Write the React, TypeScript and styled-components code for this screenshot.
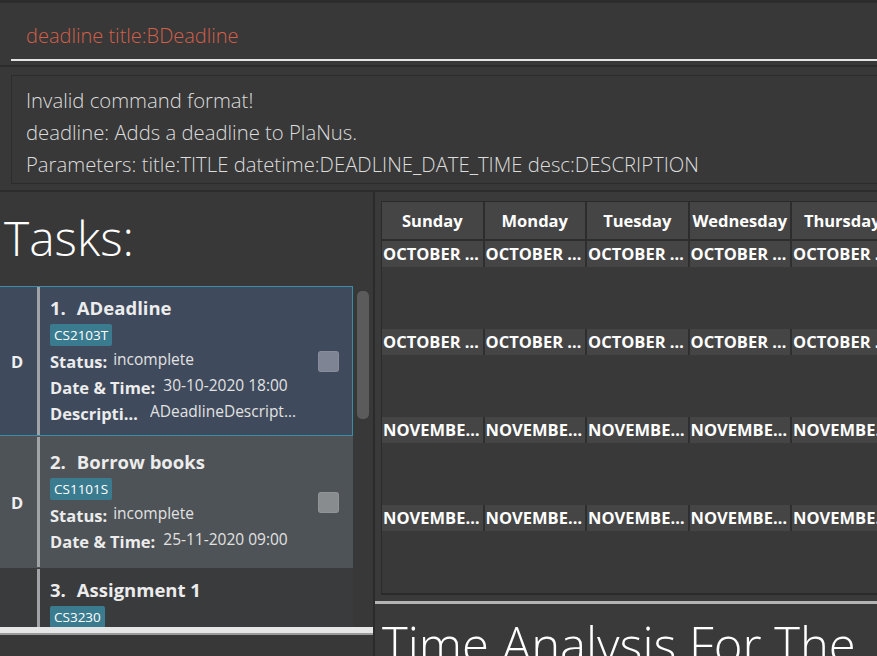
import styled, { createGlobalStyle } from "styled-components";

const GlobalStyle = createGlobalStyle`
  html, body {
    margin: 0;
    padding: 0;
    background: #383838;
    overflow: hidden;
  }
  * { box-sizing: border-box; }
`;

const Window = styled.div`
  width: 877px;
  height: 656px;
  display: flex;
  flex-direction: column;
  background: #383838;
  overflow: hidden;
  font-family: "Open Sans", "Noto Sans", sans-serif;
  color: #ffffff;
`;

const CommandBar = styled.div`
  height: 67px;
  flex-shrink: 0;
  border-top: 3px solid #2c2c2c;
  border-bottom: 2px solid #2c2c2c;
  padding: 0 0 0 11px;
`;

const CommandInput = styled.div`
  height: 58px;
  border-bottom: 2px solid #e4e4e4;
  padding: 19px 0 0 15px;
  font-size: 20px;
  font-weight: 300;
  line-height: 28px;
  color: #d45f48;
  white-space: nowrap;
`;

const ResultBox = styled.div`
  margin: 8px 0 0 11px;
  height: 109px;
  flex-shrink: 0;
  border: 1px solid #2c2c2c;
  border-right: none;
  padding: 8px 0 0 14px;
  font-size: 20.3px;
  font-weight: 300;
  line-height: 32px;
  color: #dcdcdc;
  white-space: nowrap;
`;

const Main = styled.div`
  flex: 1;
  margin-top: 6px;
  display: flex;
  border-top: 2px solid #2c2c2c;
  min-height: 0;
`;

const LeftPane = styled.div`
  width: 375px;
  flex-shrink: 0;
  display: flex;
  flex-direction: column;
  border-right: 2px solid #2b2b2b;
  overflow: hidden;
`;

const PaneTitle = styled.div`
  height: 94px;
  flex-shrink: 0;
  padding: 16px 0 0 4px;
  font-size: 48px;
  font-weight: 300;
  line-height: 60px;
  color: #ffffff;
  white-space: nowrap;
`;

const ListArea = styled.div`
  height: 341px;
  flex-shrink: 0;
  display: flex;
  overflow: hidden;
`;

const CardColumn = styled.div`
  width: 353px;
  flex-shrink: 0;
  display: flex;
  flex-direction: column;
`;

const Card = styled.div<{ $bg: string; $selected?: boolean }>`
  display: grid;
  grid-template-columns: 37px 3px 1fr 34px;
  min-height: 132px;
  background: ${(p) => p.$bg};
  border: 1px solid ${(p) => (p.$selected ? "#3b8da3" : p.$bg)};
  border-left: none;
  flex-shrink: 0;
`;

const TypeCell = styled.div`
  display: flex;
  align-items: center;
  padding-left: 11px;
  font-size: 16.5px;
  font-weight: 700;
  color: #f0f0f0;
`;

const Bar = styled.div`
  background: #a1a3a7;
`;

const CardBody = styled.div`
  padding: 8px 0 8px 10px;
  display: flex;
  flex-direction: column;
  justify-content: center;
  min-width: 0;
`;

const CardTitle = styled.div`
  font-size: 18.5px;
  font-weight: 700;
  line-height: 26px;
  color: #ececec;
  white-space: nowrap;
  span { margin-right: 11px; }
`;

const Tag = styled.span`
  align-self: flex-start;
  margin: 3px 0 3px;
  padding: 0 4px;
  height: 22px;
  line-height: 22px;
  background: #3b7b90;
  border-radius: 2px;
  font-size: 13.5px;
  color: #ffffff;
`;

const Field = styled.div`
  display: flex;
  align-items: flex-start;
  height: 26px;
  white-space: nowrap;
`;

const FieldLabel = styled.span<{ $max?: number }>`
  font-size: 16.5px;
  font-weight: 700;
  line-height: 26px;
  color: #ececec;
  margin-right: 6px;
  ${(p) => (p.$max ? `max-width: ${p.$max}px; overflow: hidden; text-overflow: ellipsis;` : "")}
`;

const FieldValue = styled.span<{ $max?: number; $gap?: number }>`
  font-size: 15.5px;
  line-height: 20px;
  color: #e2e2e2;
  margin-left: ${(p) => p.$gap ?? 0}px;
  ${(p) => (p.$max ? `max-width: ${p.$max}px; overflow: hidden; text-overflow: ellipsis;` : "")}
`;

const CheckCell = styled.div`
  display: flex;
  align-items: center;
`;

const CheckBox = styled.div<{ $tone: string }>`
  width: 21px;
  height: 21px;
  border-radius: 3px;
  background: ${(p) => p.$tone};
  box-shadow: inset 0 0 0 1px rgba(255, 255, 255, 0.08);
`;

const ScrollTrack = styled.div`
  flex: 1;
  padding: 5px 4px 0 4px;
`;

const ScrollThumb = styled.div`
  height: 128px;
  background: #5b5b5b;
  border-radius: 5px;
`;

const HScroll = styled.div`
  height: 8px;
  flex-shrink: 0;
  background: #e6e6e6;
  border-bottom: 2px solid #9a9a9a;
`;

const RightPane = styled.div`
  flex: 1;
  min-width: 0;
  display: flex;
  flex-direction: column;
  background: #3a3a3a;
  overflow: hidden;
`;

const Calendar = styled.div`
  flex-shrink: 0;
  margin: 9px 0 0 6px;
  width: 720px;
  border-left: 1px solid #2a2a2a;
  border-top: 1px solid #2a2a2a;
  border-bottom: 2px solid #2a2a2a;
  background: #393939;
`;

const WeekRow = styled.div`
  display: grid;
  grid-template-columns: repeat(7, 102.5px);
`;

const HeaderCell = styled.div`
  height: 39px;
  background: #454545;
  border-right: 2px solid #2d2d2d;
  border-bottom: 2px solid #2d2d2d;
  display: flex;
  align-items: center;
  justify-content: center;
  font-size: 16.5px;
  font-weight: 700;
  color: #ffffff;
`;

const DayCell = styled.div`
  height: 88px;
`;

const DayLabel = styled.div`
  height: 26px;
  background: #454545;
  border-right: 2px solid #2f2f2f;
  padding-left: 1px;
  font-size: 16.5px;
  font-weight: 700;
  line-height: 26px;
  color: #ffffff;
  white-space: nowrap;
  overflow: hidden;
  text-overflow: ellipsis;
`;

const Rule = styled.div`
  flex-shrink: 0;
  margin-top: 6px;
  height: 3px;
  background: #b4b4b4;
`;

const AnalysisTitle = styled.div`
  flex-shrink: 0;
  padding: 10px 0 0 7px;
  font-size: 49px;
  font-weight: 300;
  line-height: 60px;
  color: #ffffff;
`;

const days = ["Sunday", "Monday", "Tuesday", "Wednesday", "Thursday", "Friday", "Saturday"];
const weeks = ["OCTOBER 2020", "OCTOBER 2020", "NOVEMBER 2020", "NOVEMBER 2020"];

interface Task {
  index: number;
  title: string;
  tag: string;
  status: string;
  datetime: string;
  desc?: string;
  bg: string;
  check: string;
  selected?: boolean;
}

const tasks: Task[] = [
  {
    index: 1,
    title: "ADeadline",
    tag: "CS2103T",
    status: "incomplete",
    datetime: "30-10-2020 18:00",
    desc: "ADeadlineDescription",
    bg: "#3f4a5c",
    check: "#7e8493",
    selected: true,
  },
  {
    index: 2,
    title: "Borrow books",
    tag: "CS1101S",
    status: "incomplete",
    datetime: "25-11-2020 09:00",
    bg: "#4e5357",
    check: "#898c8f",
  },
  {
    index: 3,
    title: "Assignment 1",
    tag: "CS3230",
    status: "incomplete",
    datetime: "01-12-2020 23:59",
    desc: "Submit on LumiNUS",
    bg: "#3a3b3d",
    check: "#6c6d6f",
  },
];

const TaskCard = ({ task }: { task: Task }) => (
  <Card $bg={task.bg} $selected={task.selected}>
    <TypeCell>D</TypeCell>
    <Bar />
    <CardBody>
      <CardTitle>
        <span>{task.index}.</span>
        {task.title}
      </CardTitle>
      <Tag>{task.tag}</Tag>
      <Field>
        <FieldLabel>Status:</FieldLabel>
        <FieldValue>{task.status}</FieldValue>
      </Field>
      <Field>
        <FieldLabel>Date &amp; Time:</FieldLabel>
        <FieldValue $gap={2}>{task.datetime}</FieldValue>
      </Field>
      {task.desc && (
        <Field>
          <FieldLabel $max={88}>Description:</FieldLabel>
          <FieldValue $gap={6} $max={146}>
            {task.desc}
          </FieldValue>
        </Field>
      )}
    </CardBody>
    <CheckCell>
      <CheckBox $tone={task.check} />
    </CheckCell>
  </Card>
);

const App = () => {
  return (
    <Window>
      <GlobalStyle />
      <CommandBar>
        <CommandInput>deadline title:BDeadline</CommandInput>
      </CommandBar>
      <ResultBox>
        <div>Invalid command format!</div>
        <div>deadline: Adds a deadline to PlaNus.</div>
        <div>Parameters: title:TITLE datetime:DEADLINE_DATE_TIME desc:DESCRIPTION</div>
      </ResultBox>
      <Main>
        <LeftPane>
          <PaneTitle>Tasks:</PaneTitle>
          <ListArea>
            <CardColumn>
              {tasks.map((t) => (
                <TaskCard key={t.index} task={t} />
              ))}
            </CardColumn>
            <ScrollTrack>
              <ScrollThumb />
            </ScrollTrack>
          </ListArea>
          <HScroll />
        </LeftPane>
        <RightPane>
          <Calendar>
            <WeekRow>
              {days.map((d) => (
                <HeaderCell key={d}>{d}</HeaderCell>
              ))}
            </WeekRow>
            {weeks.map((w, i) => (
              <WeekRow key={i}>
                {days.map((d) => (
                  <DayCell key={d}>
                    <DayLabel>{w}</DayLabel>
                  </DayCell>
                ))}
              </WeekRow>
            ))}
          </Calendar>
          <Rule />
          <AnalysisTitle>Time Analysis For The Week</AnalysisTitle>
        </RightPane>
      </Main>
    </Window>
  );
};

export default App;
